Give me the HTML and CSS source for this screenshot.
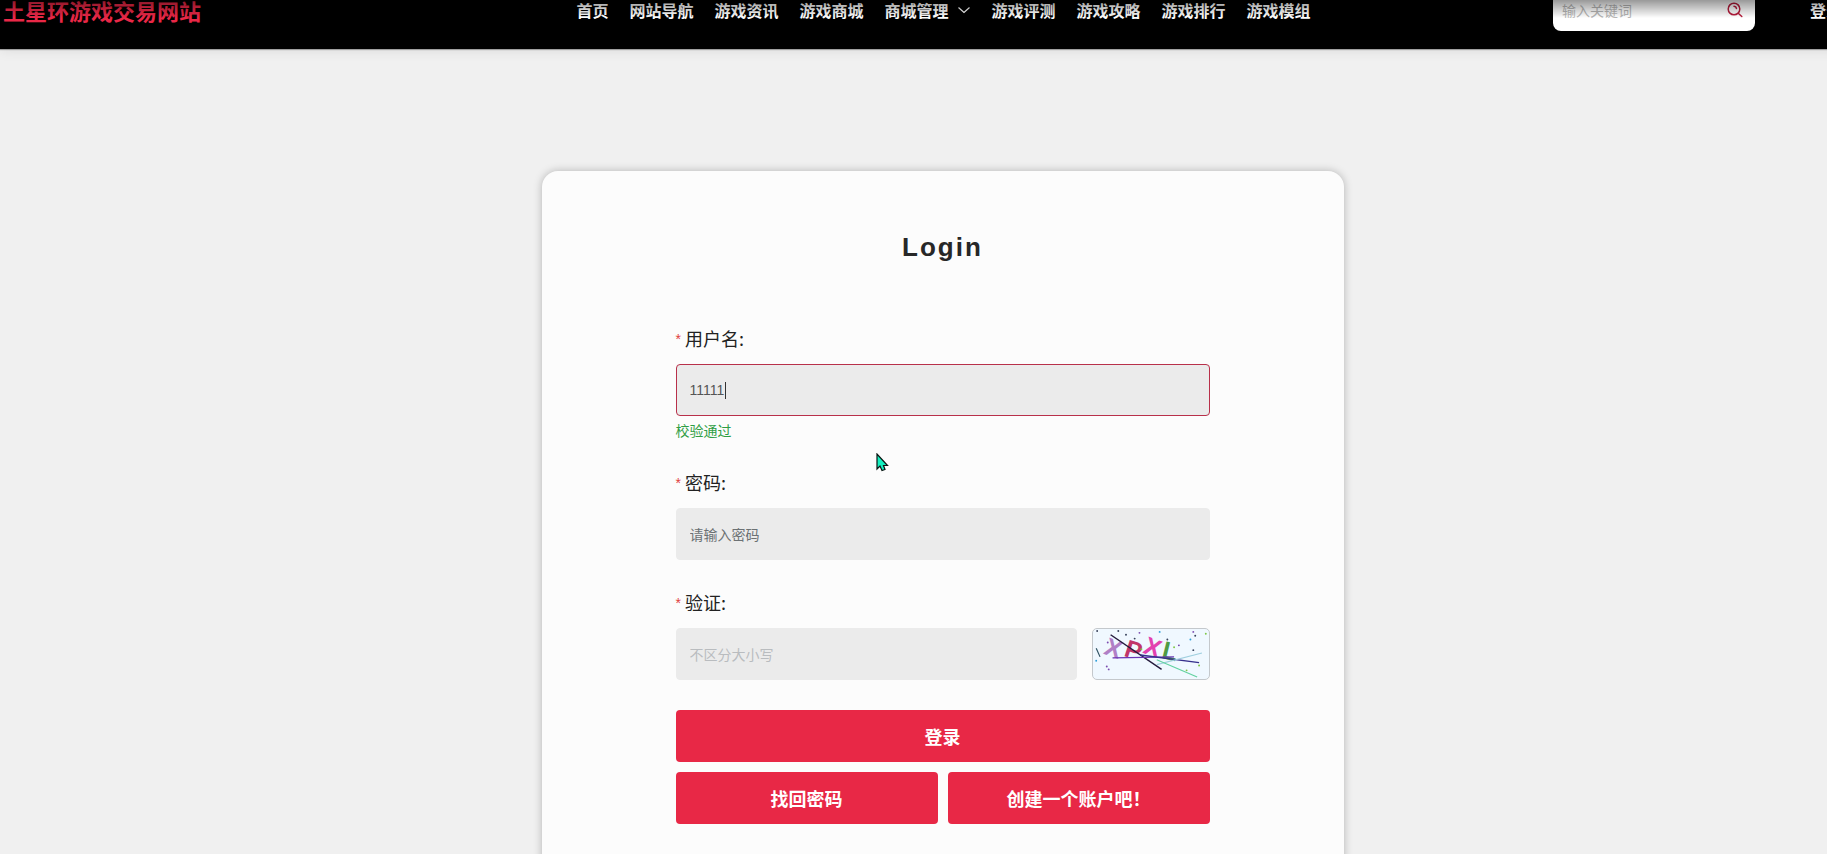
FILE: index.html
```html
<!DOCTYPE html>
<html lang="zh-CN">
<head>
    <meta charset="UTF-8">
    <meta name="viewport" content="width=device-width, initial-scale=1.0">
    <title>土星环游戏交易网站</title>
    <link rel="stylesheet" href="styles.css">
</head>
<body>
    <div class="page">
        <header class="header">
            <a href="#" class="logo">土星环游戏交易网站</a>
            <nav class="nav">
                <a href="#">首页</a>
                <a href="#">网站导航</a>
                <a href="#">游戏资讯</a>
                <a href="#">游戏商城</a>
                <a href="#" class="has-menu">商城管理
                    <svg width="14" height="8" viewBox="0 0 14 8" aria-hidden="true"><path d="M1.500 1.500 7 6.500l5.500-5" fill="none" stroke="currentColor" stroke-width="1.200"/></svg>
                </a>
                <a href="#">游戏评测</a>
                <a href="#">游戏攻略</a>
                <a href="#">游戏排行</a>
                <a href="#">游戏模组</a>
            </nav>
            <div class="header-right">
                <form class="search">
                    <input type="text" placeholder="输入关键词" aria-label="搜索">
                    <button type="button" aria-label="搜索">
                        <svg width="16" height="16" viewBox="0 0 16 16" fill="none" stroke="currentColor" stroke-width="1.500" stroke-linecap="round"><circle cx="7" cy="7" r="5.800"/><path d="M7 4.200A2.800 2.800 0 0 1 9.500 6.500M11.500 11.500l3.300 3"/></svg>
                    </button>
                </form>
                <a href="#" class="login-link">登录</a>
            </div>
        </header>
        <main class="main">
            <div class="card">
                <h2>Login</h2>
                <form class="login-form">
                    <div class="form-group">
                        <label for="username">用户名:</label>
                        <div class="input-wrap">
                            <input type="text" id="username" class="field active" value="11111">
                            <span class="caret"></span>
                        </div>
                        <p class="valid-message">校验通过</p>
                    </div>
                    <div class="form-group">
                        <label for="password">密码:</label>
                        <input type="password" id="password" class="field dark-placeholder" placeholder="请输入密码">
                    </div>
                    <div class="form-group">
                        <label for="code">验证:</label>
                        <div class="code-row">
                            <input type="text" id="code" class="field" placeholder="不区分大小写">
                            <svg class="captcha" viewBox="0 0 118 52" role="img" aria-label="验证码">
                                <g class="captcha-text">
                                    <text x="20" y="29" fill="#b07fc6" transform="rotate(20 20 20)">X</text>
                                    <text x="41" y="31" fill="#c13569" transform="rotate(18 41 22)">P</text>
                                    <text x="61" y="28" fill="#e340b0" transform="rotate(20 61 19)">X</text>
                                    <text x="79" y="32" fill="#4f9b45" transform="rotate(14 79 23)">L</text>
                                </g>
                                <g fill="none" stroke-width="1.200">
                                    <path d="M17 6 70 42" stroke="#241a3c" stroke-width="1.500"/>
                                    <path d="M19 30 83 29" stroke="#6a35b5" stroke-width="1.500"/>
                                    <path d="M48 27 109 35" stroke="#36308c" stroke-width="1.500"/>
                                    <path d="M65 37 112 25" stroke="#9fcfdf"/>
                                    <path d="M65 32 107 50" stroke="#62d1a0"/>
                                    <path d="M2 20 6 29" stroke="#2f5263"/>
                                </g>
                                <g fill="#7a4bb0">
                                    <circle cx="14" cy="14" r="1"/><circle cx="47" cy="4" r="1"/><circle cx="88" cy="17" r="1"/><circle cx="13" cy="39" r="1"/><circle cx="15" cy="42" r="1"/><circle cx="103" cy="3" r="1"/>
                                </g>
                                <g fill="#39435c">
                                    <circle cx="3" cy="2" r="1"/><circle cx="25" cy="2" r="1"/><circle cx="33" cy="6" r="1"/><circle cx="42" cy="10" r="1"/><circle cx="76" cy="11" r="1"/><circle cx="105" cy="7" r="1"/><circle cx="103" cy="22" r="1"/>
                                </g>
                                <g fill="#2f9fd8">
                                    <circle cx="2" cy="33" r="1"/><circle cx="68" cy="3" r="1"/><circle cx="100" cy="11" r="1"/>
                                </g>
                                <g fill="#7fc748">
                                    <circle cx="116" cy="5" r="1"/><circle cx="109" cy="38" r="1"/><circle cx="49" cy="21" r="1"/><circle cx="83" cy="19" r="1"/><circle cx="96" cy="43" r="1"/>
                                </g>
                            </svg>
                        </div>
                    </div>
                    <div class="buttons">
                        <button type="submit" class="btn btn-wide">登录</button>
                        <button type="button" class="btn">找回密码</button>
                        <button type="button" class="btn">创建一个账户吧！</button>
                    </div>
                </form>
                <svg class="pointer" width="13" height="19" viewBox="0 0 13 19" aria-hidden="true"><path d="M1 1v15l3-3 2 4.500 3-1-1.500-4h4z" fill="#14f0c0" stroke="#0a1512" stroke-width="1.200"/></svg>
            </div>
        </main>
    </div>
</body>
</html>
```

FILE: styles.css
```css
* {
    margin: 0;
    padding: 0;
    box-sizing: border-box;
}

body {
    min-height: 100vh;
    overflow: hidden;
    background: #f0f0f0;
    color: #222;
    font-family: "Noto Sans CJK SC", "Noto Sans", sans-serif;
    font-size: 14px;
}

/* shade under the top edge of the window */
body::before {
    content: "";
    position: fixed;
    top: 0;
    left: 0;
    right: 0;
    height: 18px;
    background: linear-gradient(rgba(0, 0, 0, 0.4), rgba(0, 0, 0, 0));
    pointer-events: none;
    z-index: 10;
}

a {
    color: inherit;
    text-decoration: none;
}

input,
button {
    font-family: inherit;
    border: none;
    outline: none;
}

button {
    cursor: pointer;
}

/* the page runs a little past the right edge of the window */
.page {
    width: calc(100% + 58px);
}

/* Header */
.header {
    display: grid;
    grid-template-columns: 1fr auto 1fr;
    align-items: center;
    height: 76px;
    margin-top: -27px;
    padding: 0 43px 2px 3px;
    background: #000;
    color: #fff;
    box-shadow: 0 1px 1px rgba(0, 0, 0, 0.3), 0 2px 12px rgba(0, 0, 0, 0.08);
}

.logo {
    color: #e92847;
    font-size: 22px;
    font-weight: bold;
}

.nav {
    display: flex;
    gap: 21px;
    margin-left: 42px;
    font-size: 16px;
    font-weight: bold;
}

.has-menu {
    display: flex;
    align-items: center;
    gap: 8px;
}

.header-right {
    display: flex;
    align-items: center;
    justify-content: flex-end;
    gap: 55px;
}

.search {
    display: flex;
    align-items: center;
    width: 202px;
    height: 42px;
    padding: 0 12px 0 9px;
    border-radius: 8px;
    background: #fff;
}

.search input {
    flex: 1;
    min-width: 0;
    background: transparent;
    font-size: 14px;
}

.search input::placeholder {
    color: #b8b8b8;
}

.search button {
    display: flex;
    background: transparent;
    color: #b81c3c;
}

.login-link {
    font-size: 16px;
    font-weight: bold;
}

/* Login card */
.main {
    padding-top: 122px;
}

.card {
    position: relative;
    width: 802px;
    margin: 0 auto;
    padding: 56px 134px;
    border-radius: 16px;
    background: #fcfcfc;
    box-shadow: 0 0 8px rgba(0, 0, 0, 0.25);
}

.card h2 {
    margin-bottom: 59px;
    color: #272727;
    font-family: "Liberation Sans", Arial, sans-serif;
    font-size: 26px;
    line-height: 40px;
    letter-spacing: 2px;
    text-align: center;
}

.form-group {
    margin-bottom: 30px;
}

.form-group label {
    display: block;
    margin-bottom: 14px;
    font-size: 18px;
    line-height: 24px;
}

.form-group label::before {
    content: "*";
    margin-right: 4px;
    color: #e0403c;
    font-family: "Liberation Sans", Arial, sans-serif;
    font-size: 14px;
    line-height: 1;
    vertical-align: 2px;
}

.input-wrap {
    position: relative;
}

.field {
    display: block;
    width: 100%;
    height: 52px;
    padding: 0 13px;
    border: 1px solid #ebebeb;
    border-radius: 4px;
    background: #ebebeb;
    color: #555;
    font-size: 14px;
}

.field::placeholder {
    color: #b9bcbf;
}

.dark-placeholder::placeholder {
    color: #6c7174;
}

.field.active {
    border-color: #b8304a;
    font-family: "Liberation Sans", Arial, sans-serif;
}

.caret {
    position: absolute;
    top: 18px;
    left: 49px;
    width: 1px;
    height: 17px;
    background: #333;
}

.valid-message {
    margin-top: 4px;
    color: #2f9e44;
    line-height: 20px;
}

.code-row {
    display: flex;
    gap: 15px;
}

.code-row .field {
    flex: 1;
    min-width: 0;
}

.captcha {
    width: 118px;
    height: 52px;
    border: 1px solid #c4c8cc;
    border-radius: 5px;
    background: #f0f8ff;
}

.captcha-text {
    font-family: "Liberation Sans", Arial, sans-serif;
    font-size: 26px;
    font-weight: bold;
    text-anchor: middle;
}

.buttons {
    display: grid;
    grid-template-columns: 1fr 1fr;
    gap: 10px;
}

.btn {
    height: 52px;
    border-radius: 4px;
    background: #e82846;
    color: #fff;
    font-size: 18px;
    font-weight: bold;
}

.btn-wide {
    grid-column: 1 / 3;
}

.pointer {
    position: absolute;
    top: 282px;
    left: 334px;
}
```
